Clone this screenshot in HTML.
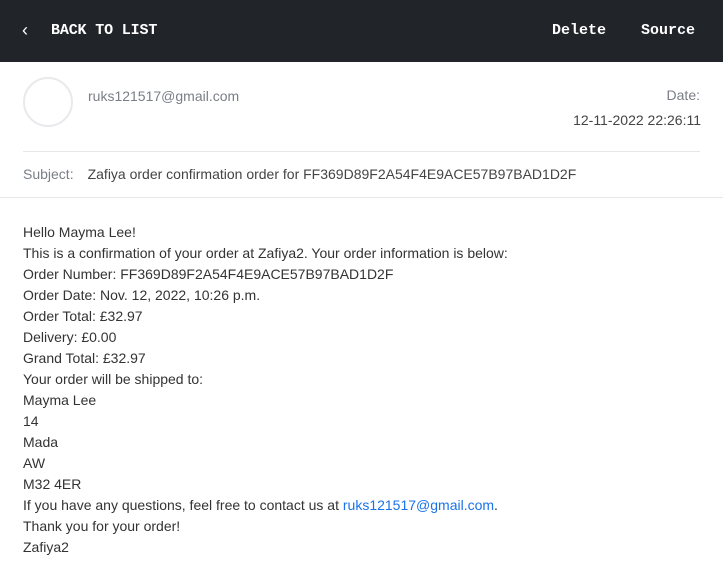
<!DOCTYPE html>
<html><head><style>
body{margin:0;width:723px;height:582px;background:#fff;font-family:"Liberation Sans",Arial,sans-serif;overflow:hidden}
.top{height:62px;background:#212429;color:#fff;font-family:"Liberation Mono",monospace;font-weight:bold;font-size:15px;position:relative}
.top span{position:absolute;top:22px}
.av{position:absolute;left:23px;top:77px;width:46px;height:46px;border:2px solid #e8e9ec;border-radius:50%}
.g{color:#7a7e87;font-size:14px}
.body{position:absolute;left:23px;top:222px;font-size:14px;line-height:21px;color:#333}
a{color:#1a73e8;text-decoration:none}
</style></head><body>
<div class="top">
<span style="left:22px;font-weight:normal;font-family:'Liberation Sans',sans-serif;top:20px;font-size:18px">&#x2039;</span>
<span style="left:51px;letter-spacing:-0.15px">BACK TO LIST</span>
<span style="left:552px">Delete</span>
<span style="left:641px">Source</span>
</div>
<div class="av"></div>
<div class="g" style="position:absolute;left:88px;top:88px">ruks121517@gmail.com</div>
<div class="g" style="position:absolute;right:23px;top:87px">Date:</div>
<div style="position:absolute;right:22px;top:112px;font-size:14px;color:#444">12-11-2022 22:26:11</div>
<div style="position:absolute;left:23px;right:23px;top:151px;border-top:1px solid #e6e7ea"></div>
<div style="position:absolute;left:23px;top:166px;font-size:14px"><span class="g">Subject:</span><span style="color:#444;margin-left:14px">Zafiya order confirmation order for FF369D89F2A54F4E9ACE57B97BAD1D2F</span></div>
<div style="position:absolute;left:0;right:0;top:197px;border-top:1px solid #e6e7ea"></div>
<div class="body">
Hello Mayma Lee!<br>This is a confirmation of your order at Zafiya2. Your order information is below:<br>Order Number: FF369D89F2A54F4E9ACE57B97BAD1D2F<br>Order Date: Nov. 12, 2022, 10:26 p.m.<br>Order Total: £32.97<br>Delivery: £0.00<br>Grand Total: £32.97<br>Your order will be shipped to:<br>Mayma Lee<br>14<br>Mada<br>AW<br>M32 4ER<br>If you have any questions, feel free to contact us at <a>ruks121517@gmail.com</a>.<br>Thank you for your order!<br>Zafiya2
</div>
</body></html>
